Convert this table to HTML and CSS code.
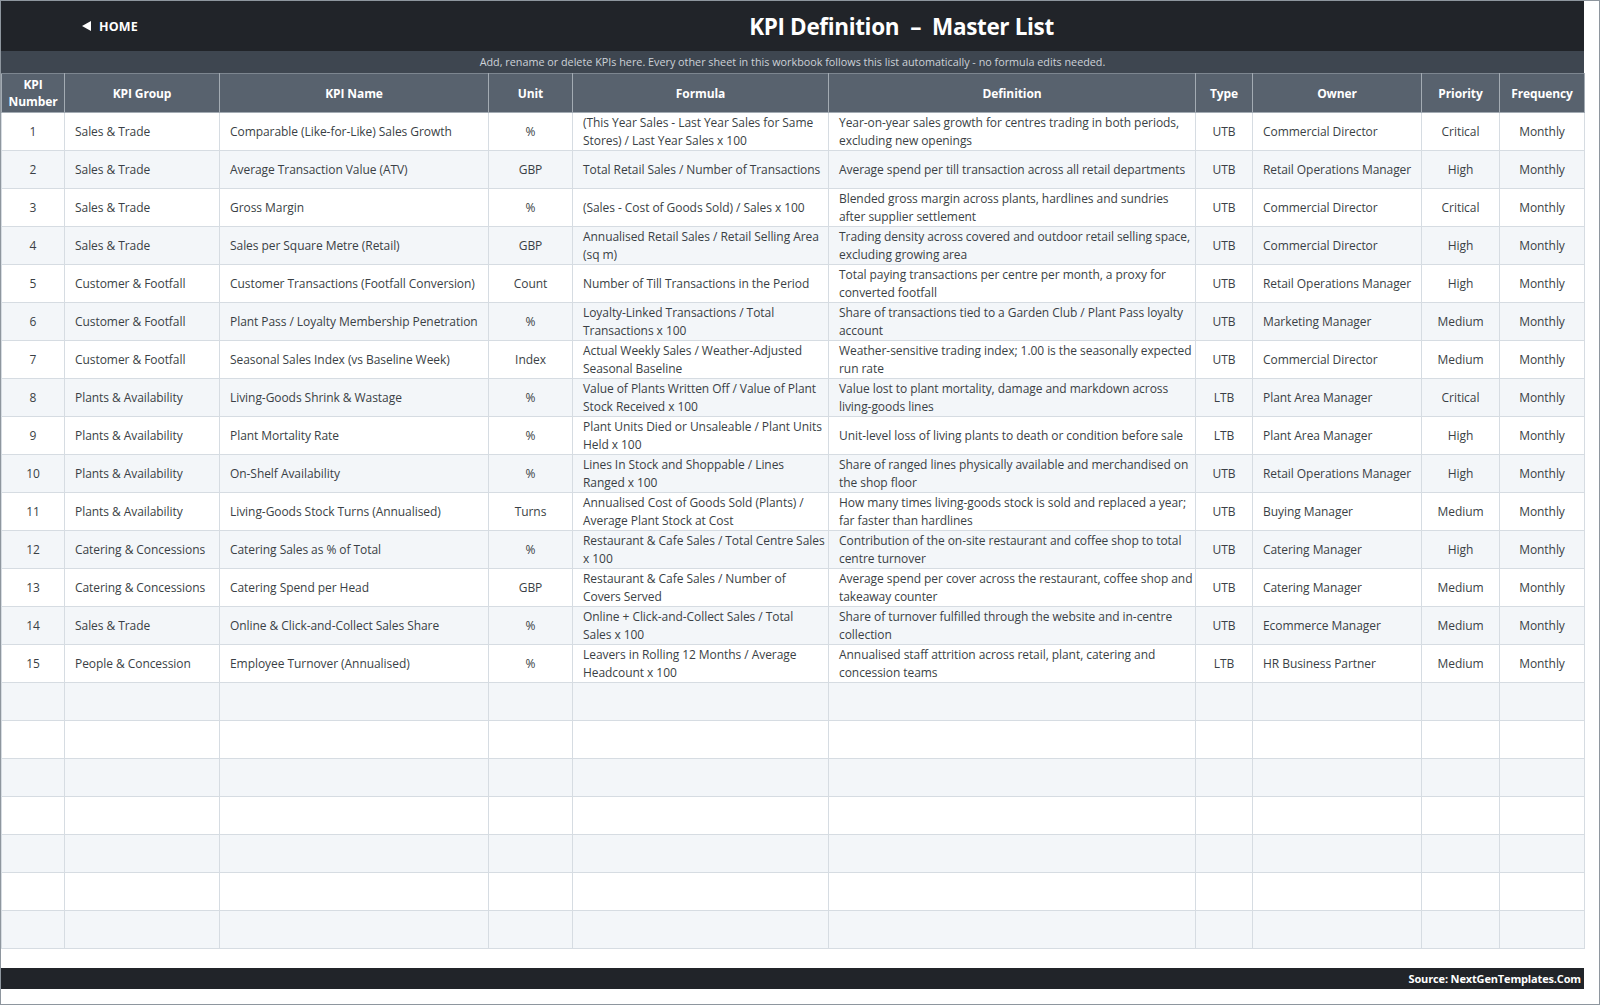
FILE: index.html
```html
<!DOCTYPE html>
<html lang="en">
<head>
<meta charset="utf-8">
<title>KPI Definition – Master List</title>
<link rel="stylesheet" href="styles.css">
</head>
<body>
<div class="frame">
  <header class="topbar">
    <div class="home"><span class="tri"></span><span>HOME</span></div>
    <h1 class="title">KPI Definition &nbsp;–&nbsp; Master List</h1>
  </header>
  <div class="subbar">Add, rename or delete KPIs here. Every other sheet in this workbook follows this list automatically - no formula edits needed.</div>
  <table class="kpi">
    <colgroup>
      <col class="c-num"><col class="c-group"><col class="c-name"><col class="c-unit"><col class="c-formula"><col class="c-def"><col class="c-type"><col class="c-owner"><col class="c-prio"><col class="c-freq">
    </colgroup>
    <thead>
      <tr><th>KPI<br>Number</th><th>KPI Group</th><th>KPI Name</th><th>Unit</th><th>Formula</th><th>Definition</th><th>Type</th><th>Owner</th><th>Priority</th><th>Frequency</th></tr>
    </thead>
    <tbody>
      <tr><td class="ctr">1</td><td>Sales &amp; Trade</td><td>Comparable (Like-for-Like) Sales Growth</td><td class="ctr">%</td><td>(This Year Sales - Last Year Sales for Same<br>Stores) / Last Year Sales x 100</td><td>Year-on-year sales growth for centres trading in both periods,<br>excluding new openings</td><td class="ctr">UTB</td><td>Commercial Director</td><td class="ctr">Critical</td><td class="ctr">Monthly</td></tr>
      <tr><td class="ctr">2</td><td>Sales &amp; Trade</td><td>Average Transaction Value (ATV)</td><td class="ctr">GBP</td><td>Total Retail Sales / Number of Transactions</td><td>Average spend per till transaction across all retail departments</td><td class="ctr">UTB</td><td>Retail Operations Manager</td><td class="ctr">High</td><td class="ctr">Monthly</td></tr>
      <tr><td class="ctr">3</td><td>Sales &amp; Trade</td><td>Gross Margin</td><td class="ctr">%</td><td>(Sales - Cost of Goods Sold) / Sales x 100</td><td>Blended gross margin across plants, hardlines and sundries<br>after supplier settlement</td><td class="ctr">UTB</td><td>Commercial Director</td><td class="ctr">Critical</td><td class="ctr">Monthly</td></tr>
      <tr><td class="ctr">4</td><td>Sales &amp; Trade</td><td>Sales per Square Metre (Retail)</td><td class="ctr">GBP</td><td>Annualised Retail Sales / Retail Selling Area<br>(sq m)</td><td>Trading density across covered and outdoor retail selling space,<br>excluding growing area</td><td class="ctr">UTB</td><td>Commercial Director</td><td class="ctr">High</td><td class="ctr">Monthly</td></tr>
      <tr><td class="ctr">5</td><td>Customer &amp; Footfall</td><td>Customer Transactions (Footfall Conversion)</td><td class="ctr">Count</td><td>Number of Till Transactions in the Period</td><td>Total paying transactions per centre per month, a proxy for<br>converted footfall</td><td class="ctr">UTB</td><td>Retail Operations Manager</td><td class="ctr">High</td><td class="ctr">Monthly</td></tr>
      <tr><td class="ctr">6</td><td>Customer &amp; Footfall</td><td>Plant Pass / Loyalty Membership Penetration</td><td class="ctr">%</td><td>Loyalty-Linked Transactions / Total<br>Transactions x 100</td><td>Share of transactions tied to a Garden Club / Plant Pass loyalty<br>account</td><td class="ctr">UTB</td><td>Marketing Manager</td><td class="ctr">Medium</td><td class="ctr">Monthly</td></tr>
      <tr><td class="ctr">7</td><td>Customer &amp; Footfall</td><td>Seasonal Sales Index (vs Baseline Week)</td><td class="ctr">Index</td><td>Actual Weekly Sales / Weather-Adjusted<br>Seasonal Baseline</td><td>Weather-sensitive trading index; 1.00 is the seasonally expected<br>run rate</td><td class="ctr">UTB</td><td>Commercial Director</td><td class="ctr">Medium</td><td class="ctr">Monthly</td></tr>
      <tr><td class="ctr">8</td><td>Plants &amp; Availability</td><td>Living-Goods Shrink &amp; Wastage</td><td class="ctr">%</td><td>Value of Plants Written Off / Value of Plant<br>Stock Received x 100</td><td>Value lost to plant mortality, damage and markdown across<br>living-goods lines</td><td class="ctr">LTB</td><td>Plant Area Manager</td><td class="ctr">Critical</td><td class="ctr">Monthly</td></tr>
      <tr><td class="ctr">9</td><td>Plants &amp; Availability</td><td>Plant Mortality Rate</td><td class="ctr">%</td><td>Plant Units Died or Unsaleable / Plant Units<br>Held x 100</td><td>Unit-level loss of living plants to death or condition before sale</td><td class="ctr">LTB</td><td>Plant Area Manager</td><td class="ctr">High</td><td class="ctr">Monthly</td></tr>
      <tr><td class="ctr">10</td><td>Plants &amp; Availability</td><td>On-Shelf Availability</td><td class="ctr">%</td><td>Lines In Stock and Shoppable / Lines<br>Ranged x 100</td><td>Share of ranged lines physically available and merchandised on<br>the shop floor</td><td class="ctr">UTB</td><td>Retail Operations Manager</td><td class="ctr">High</td><td class="ctr">Monthly</td></tr>
      <tr><td class="ctr">11</td><td>Plants &amp; Availability</td><td>Living-Goods Stock Turns (Annualised)</td><td class="ctr">Turns</td><td>Annualised Cost of Goods Sold (Plants) /<br>Average Plant Stock at Cost</td><td>How many times living-goods stock is sold and replaced a year;<br>far faster than hardlines</td><td class="ctr">UTB</td><td>Buying Manager</td><td class="ctr">Medium</td><td class="ctr">Monthly</td></tr>
      <tr><td class="ctr">12</td><td>Catering &amp; Concessions</td><td>Catering Sales as % of Total</td><td class="ctr">%</td><td>Restaurant &amp; Cafe Sales / Total Centre Sales<br>x 100</td><td>Contribution of the on-site restaurant and coffee shop to total<br>centre turnover</td><td class="ctr">UTB</td><td>Catering Manager</td><td class="ctr">High</td><td class="ctr">Monthly</td></tr>
      <tr><td class="ctr">13</td><td>Catering &amp; Concessions</td><td>Catering Spend per Head</td><td class="ctr">GBP</td><td>Restaurant &amp; Cafe Sales / Number of<br>Covers Served</td><td>Average spend per cover across the restaurant, coffee shop and<br>takeaway counter</td><td class="ctr">UTB</td><td>Catering Manager</td><td class="ctr">Medium</td><td class="ctr">Monthly</td></tr>
      <tr><td class="ctr">14</td><td>Sales &amp; Trade</td><td>Online &amp; Click-and-Collect Sales Share</td><td class="ctr">%</td><td>Online + Click-and-Collect Sales / Total<br>Sales x 100</td><td>Share of turnover fulfilled through the website and in-centre<br>collection</td><td class="ctr">UTB</td><td>Ecommerce Manager</td><td class="ctr">Medium</td><td class="ctr">Monthly</td></tr>
      <tr><td class="ctr">15</td><td>People &amp; Concession</td><td>Employee Turnover (Annualised)</td><td class="ctr">%</td><td>Leavers in Rolling 12 Months / Average<br>Headcount x 100</td><td>Annualised staff attrition across retail, plant, catering and<br>concession teams</td><td class="ctr">LTB</td><td>HR Business Partner</td><td class="ctr">Medium</td><td class="ctr">Monthly</td></tr>
      <tr class="empty"><td></td><td></td><td></td><td></td><td></td><td></td><td></td><td></td><td></td><td></td></tr>
      <tr class="empty"><td></td><td></td><td></td><td></td><td></td><td></td><td></td><td></td><td></td><td></td></tr>
      <tr class="empty"><td></td><td></td><td></td><td></td><td></td><td></td><td></td><td></td><td></td><td></td></tr>
      <tr class="empty"><td></td><td></td><td></td><td></td><td></td><td></td><td></td><td></td><td></td><td></td></tr>
      <tr class="empty"><td></td><td></td><td></td><td></td><td></td><td></td><td></td><td></td><td></td><td></td></tr>
      <tr class="empty"><td></td><td></td><td></td><td></td><td></td><td></td><td></td><td></td><td></td><td></td></tr>
      <tr class="empty"><td></td><td></td><td></td><td></td><td></td><td></td><td></td><td></td><td></td><td></td></tr>
    </tbody>
  </table>
  <footer class="footbar">Source: NextGenTemplates.Com</footer>
</div>
</body>
</html>
```
FILE: styles.css
```css
html, body {
  margin: 0;
  padding: 0;
  background: #ffffff;
}

body {
  font-family: "Open Sans", "Noto Sans", "DejaVu Sans", sans-serif;
  color: #3a3f45;
}

.frame {
  width: 1600px;
  height: 1005px;
  box-sizing: border-box;
  border: 1px solid #8e969e;
  padding-right: 15px;
  display: flex;
  flex-direction: column;
  background: #ffffff;
}

.topbar {
  height: 50px;
  flex: none;
  background: #212429;
  color: #ffffff;
  display: grid;
  grid-template-columns: 218px 1fr;
  align-items: center;
}

.home {
  display: flex;
  justify-content: center;
  align-items: center;
  gap: 8px;
  font-size: 12.5px;
  font-weight: 700;
  letter-spacing: 0.2px;
}

.tri {
  width: 0;
  height: 0;
  border-top: 5px solid transparent;
  border-bottom: 5px solid transparent;
  border-right: 9px solid #ffffff;
}

.title {
  margin: 0;
  text-align: center;
  font-size: 22.5px;
  font-weight: 700;
  letter-spacing: -0.35px;
}

.subbar {
  height: 22px;
  flex: none;
  background: #3e4650;
  color: #cdd2d8;
  font-size: 10.8px;
  line-height: 22px;
  text-align: center;
  letter-spacing: 0;
}

.kpi {
  width: 1583px;
  table-layout: fixed;
  border-collapse: collapse;
  font-size: 12px;
  letter-spacing: -0.06px;
}

.c-num { width: 63px; }
.c-group { width: 155px; }
.c-name { width: 269px; }
.c-unit { width: 84px; }
.c-formula { width: 256px; }
.c-def { width: 367px; }
.c-type { width: 57px; }
.c-owner { width: 169px; }
.c-prio { width: 78px; }
.c-freq { width: 85px; }

.kpi thead tr {
  height: 39px;
}

.kpi th {
  background: #58626e;
  color: #ffffff;
  font-weight: 700;
  font-size: 12px;
  line-height: 17px;
  letter-spacing: -0.1px;
  border: 1px solid #a3abb3;
  border-top: 1px solid #7d8690;
  padding: 0 4px;
  text-align: center;
  vertical-align: middle;
}

.kpi tbody tr {
  height: 38px;
}

.kpi tbody tr:nth-child(even) {
  background: #f3f6f9;
}

.kpi td {
  border: 1px solid #d6dce2;
  padding: 0 4px 0 10px;
  line-height: 18px;
  vertical-align: middle;
  white-space: nowrap;
  overflow: visible;
}

.kpi td.ctr {
  text-align: center;
  padding: 0 4px;
}

.footbar {
  flex: none;
  margin-top: 19px;
  height: 21px;
  background: #212429;
  color: #ffffff;
  font-size: 11px;
  font-weight: 700;
  line-height: 21px;
  text-align: right;
  padding-right: 3px;
  letter-spacing: -0.15px;
}
```
